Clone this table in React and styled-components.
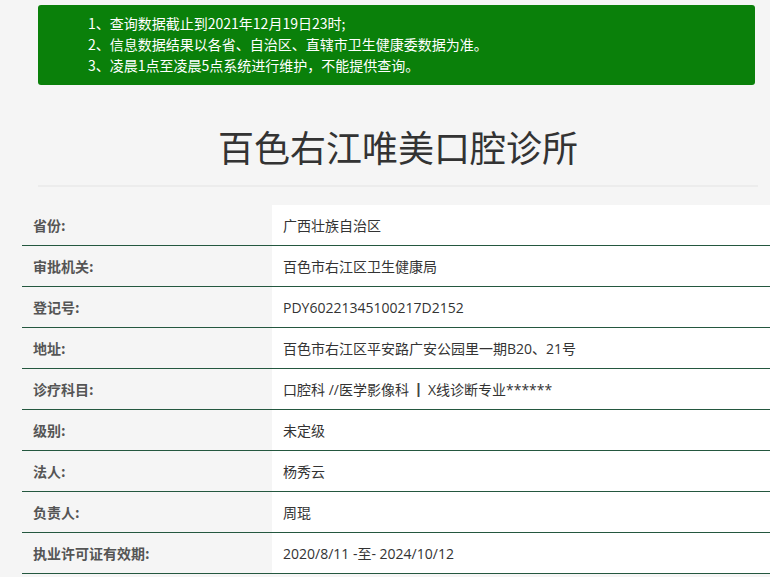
import styled, { createGlobalStyle } from "styled-components";

const GlobalStyle = createGlobalStyle`
  html, body {
    margin: 0;
    padding: 0;
    background: #f5f5f5;
    overflow: hidden;
  }
  body {
    font-family: "Open Sans", "Noto Sans CJK SC", sans-serif;
    color: #333;
  }
`;

const Page = styled.div`
  padding-top: 5px;
`;

const Wrap = styled.div`
  width: 720px;
  margin-left: 38px;
`;

const Notice = styled.div`
  width: 717px;
  height: 80px;
  box-sizing: border-box;
  padding: 8px 0 0 50px;
  background: #0a800a;
  border-radius: 3px;
  color: #fff;
  font-family: "Noto Sans CJK SC", sans-serif;
  font-size: 14px;
  line-height: 21px;
`;

const NoticeLine = styled.div`
  white-space: nowrap;
`;

const Title = styled.h1`
  margin: 40px 0 0;
  text-align: center;
  font-family: "Noto Sans CJK SC", sans-serif;
  font-weight: 400;
  font-size: 36px;
  line-height: 43px;
  color: #333;
`;

const Rule = styled.hr`
  margin: 17px 0 0;
  border: 0;
  border-top: 2px solid #ececec;
`;

const Table = styled.div`
  margin: 18px 0 0 22px;
  width: 760px;
`;

const Row = styled.div`
  display: grid;
  grid-template-columns: 250px 1fr;
  height: 41px;
  box-sizing: border-box;
  border-bottom: 1.5px solid #24573f;
`;

const Label = styled.div`
  display: flex;
  align-items: center;
  padding-left: 11px;
  font-family: "Noto Sans CJK SC", sans-serif;
  font-weight: 700;
  font-size: 14px;
  color: #555;
`;

const Value = styled.div`
  display: flex;
  align-items: center;
  padding-left: 11px;
  background: #fff;
  font-size: 14px;
  color: #333;
  white-space: pre;
`;

const Bar = styled.span`
  font-family: "Liberation Sans", sans-serif;
  font-weight: 700;
  color: #444;
`;

const notes = [
  "1、查询数据截止到2021年12月19日23时;",
  "2、信息数据结果以各省、自治区、直辖市卫生健康委数据为准。",
  "3、凌晨1点至凌晨5点系统进行维护，不能提供查询。",
];

const rows = [
  ["省份:", "广西壮族自治区"],
  ["审批机关:", "百色市右江区卫生健康局"],
  ["登记号:", "PDY60221345100217D2152"],
  ["地址:", "百色市右江区平安路广安公园里一期B20、21号"],
  [
    "诊疗科目:",
    <>
      口腔科 //医学影像科 <Bar> | </Bar> X线诊断专业******
    </>,
  ],
  ["级别:", "未定级"],
  ["法人:", "杨秀云"],
  ["负责人:", "周琨"],
  ["执业许可证有效期:", "2020/8/11 -至- 2024/10/12"],
];

export default function App() {
  return (
    <Page>
      <GlobalStyle />
      <Wrap>
        <Notice>
          {notes.map((n) => (
            <NoticeLine key={n}>{n}</NoticeLine>
          ))}
        </Notice>
        <Title>百色右江唯美口腔诊所</Title>
        <Rule />
      </Wrap>
      <Table>
        {rows.map(([k, v]) => (
          <Row key={k}>
            <Label>{k}</Label>
            <Value>{v}</Value>
          </Row>
        ))}
      </Table>
    </Page>
  );
}
